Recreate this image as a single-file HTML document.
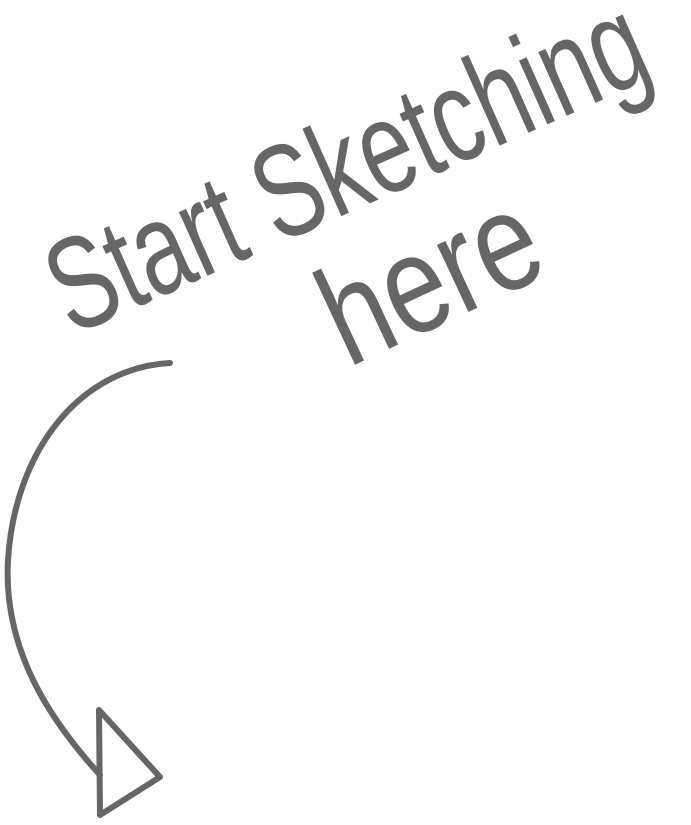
<!DOCTYPE html>
<html>
<head>
<meta charset="utf-8">
<style>
html,body{margin:0;padding:0;background:#fff;width:691px;height:825px;overflow:hidden;}
svg{display:block;}
</style>
</head>
<body>
<svg width="691" height="825" viewBox="0 0 691 825" xmlns="http://www.w3.org/2000/svg">
  <g fill="#666" font-family="Liberation Sans, sans-serif">
    <text x="0" y="0" font-size="132" textLength="640" lengthAdjust="spacingAndGlyphs" transform="translate(72,336) rotate(-24)">Start Sketching</text>
    <text x="0" y="0" font-size="140" textLength="225" lengthAdjust="spacingAndGlyphs" transform="translate(348,368) rotate(-25)">here</text>
  </g>
  <g fill="none" stroke="#666" stroke-width="6" stroke-linecap="round" stroke-linejoin="round">
    <path d="M170,363 C80,368 15,450 8,560 C3,650 50,720 100,775"/>
    <path d="M99,710 L100,815 L160,777 Z"/>
  </g>
</svg>
</body>
</html>
